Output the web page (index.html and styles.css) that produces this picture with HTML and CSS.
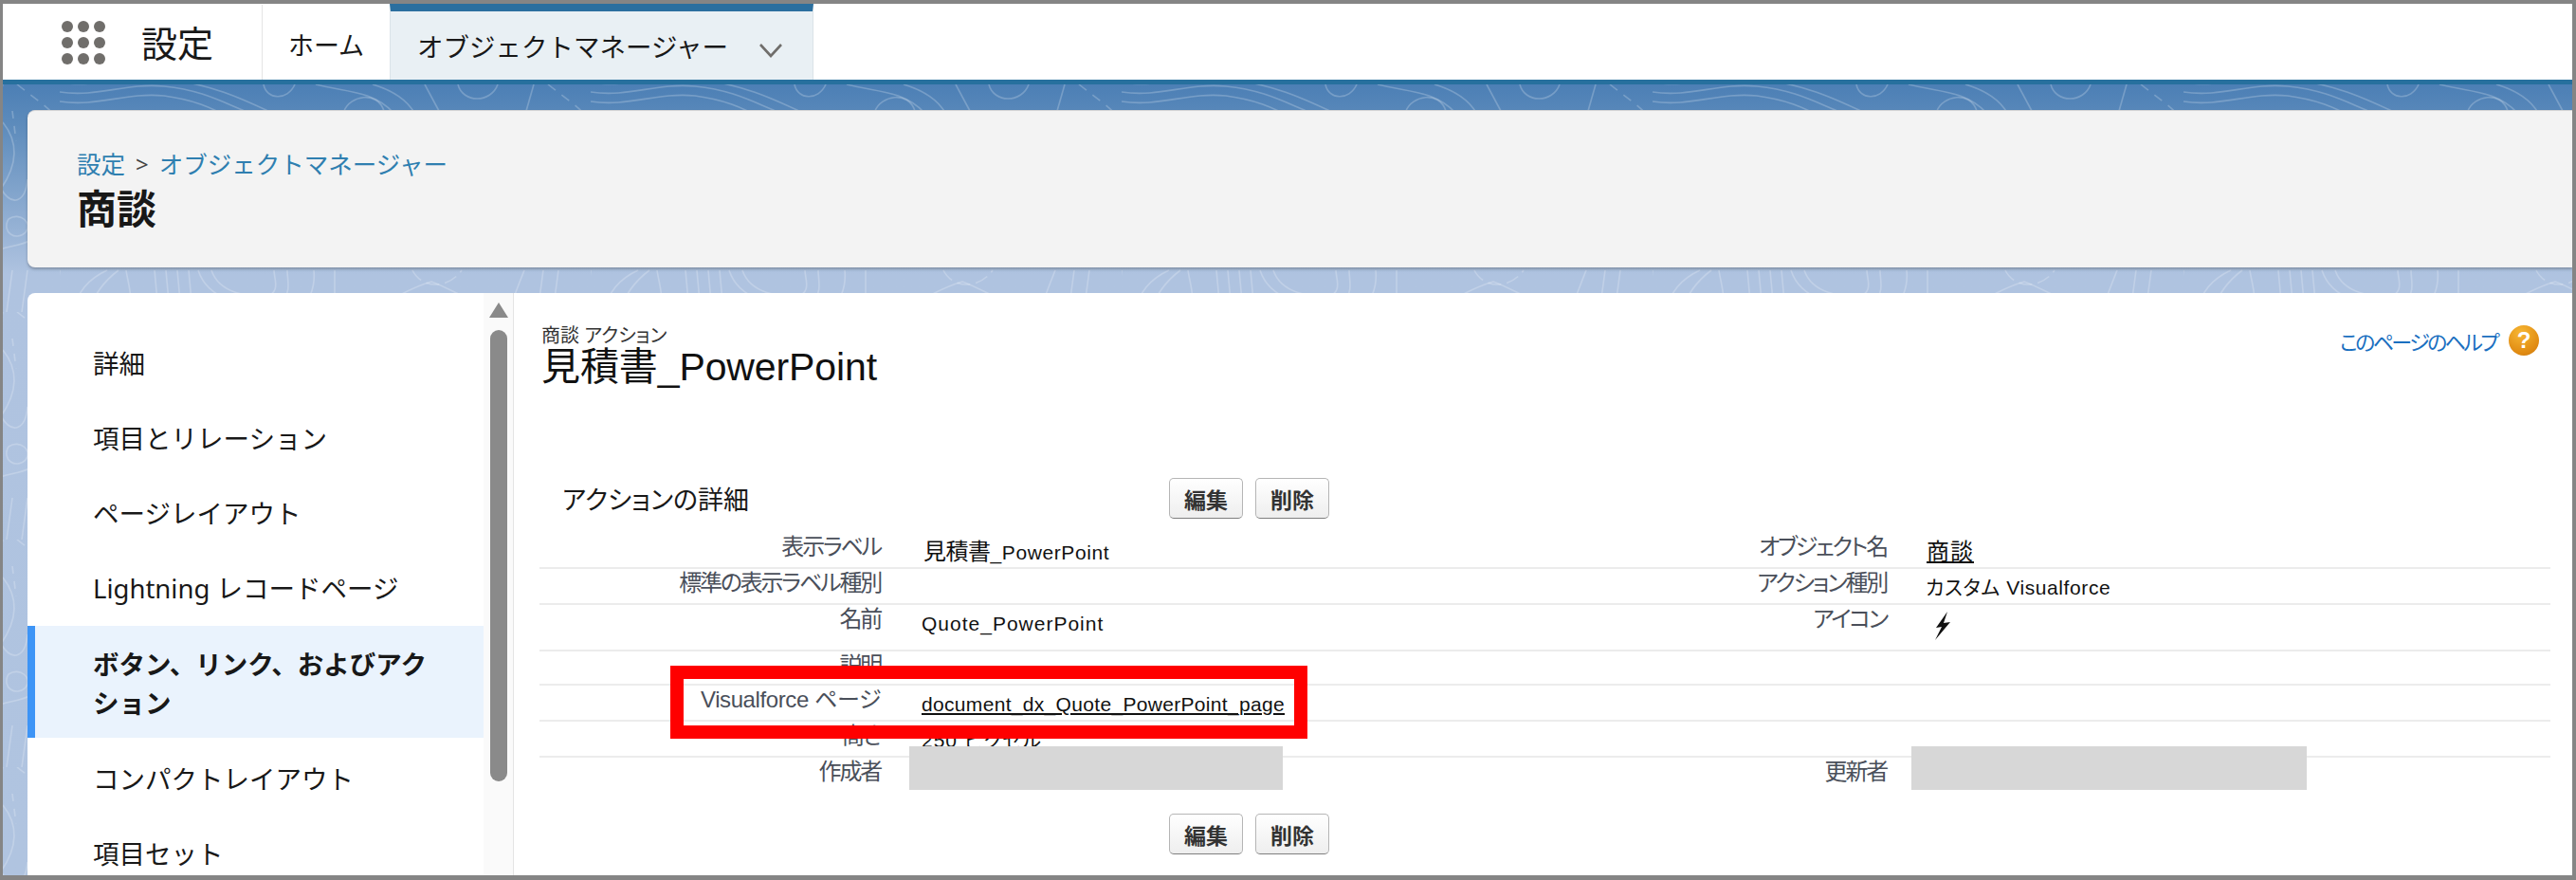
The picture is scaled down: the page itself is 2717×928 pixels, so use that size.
FILE: index.html
```html
<!DOCTYPE html>
<html lang="ja">
<head>
<meta charset="utf-8">
<title>商談 アクション</title>
<link rel="stylesheet" href="styles.css">
</head>
<body>
<div class="window">
  <header class="topbar">
    <div class="brand">
      <svg class="launcher" viewBox="0 0 46 46" width="46" height="46" aria-hidden="true">
        <g fill="#706e6b">
          <circle cx="6" cy="6" r="6"/><circle cx="23" cy="6" r="6"/><circle cx="40" cy="6" r="6"/>
          <circle cx="6" cy="23" r="6"/><circle cx="23" cy="23" r="6"/><circle cx="40" cy="23" r="6"/>
          <circle cx="6" cy="40" r="6"/><circle cx="23" cy="40" r="6"/><circle cx="40" cy="40" r="6"/>
        </g>
      </svg>
      <span class="brand-name">設定</span>
    </div>
    <div class="tab">ホーム</div>
    <div class="tab tab-active">
      <span>オブジェクトマネージャー</span>
      <svg class="chevron" viewBox="0 0 26 16" width="26" height="16" aria-hidden="true">
        <path d="M2 2 L13 14 L24 2" fill="none" stroke="#706e6b" stroke-width="2.6"/>
      </svg>
    </div>
  </header>
  <div class="brandbar"></div>

  <div class="stage">
    <svg class="contours" width="2710" height="840" aria-hidden="true">
      <defs>
        <pattern id="topo" width="560" height="240" patternUnits="userSpaceOnUse" x="60">
          <g fill="none" stroke="#ffffff" stroke-opacity="0.22" stroke-width="1.6">
            <path d="M0 8 C40 14 70 -2 110 2 C150 6 170 18 200 30"/>
            <path d="M0 18 C40 24 70 8 110 12 C140 16 160 24 180 36"/>
            <path d="M0 -2 C40 4 70 -10 110 -6 C160 0 190 14 224 30"/>
            <path d="M215 0 C218 16 240 18 248 0"/>
            <path d="M270 0 C300 8 330 6 352 30"/>
            <path d="M300 28 C306 12 335 6 342 28"/>
            <path d="M330 0 C350 6 366 16 374 30"/>
            <path d="M385 0 L400 28"/>
            <path d="M420 0 C425 20 455 20 462 0"/>
            <path d="M500 0 L492 28"/>
            <path d="M515 0 C530 12 545 22 552 30" stroke-dasharray="10 8"/>
            <path d="M500 40 C516 60 516 84 498 110 C510 130 524 124 526 100"/>
            <path d="M506 142 C518 134 532 146 524 156 C514 166 498 156 506 142"/>
            <path d="M490 178 C500 170 516 172 530 164"/>
            <path d="M510 28 L514 60" stroke-dasharray="8 8"/>
            <path d="M0 196 L-6 240"/>
            <path d="M14 240 C18 220 30 205 50 196"/>
            <path d="M30 240 C36 222 46 208 62 196"/>
            <path d="M70 196 C72 210 78 225 72 240"/>
            <path d="M100 196 L104 240 M112 196 L116 240 M124 196 L128 240 M136 196 L140 240"/>
            <path d="M160 196 C168 220 200 226 222 222 C232 216 226 204 226 196"/>
            <path d="M146 196 C156 226 190 236 236 230 C244 216 240 206 240 196"/>
            <path d="M268 196 C270 216 262 230 252 240"/>
            <path d="M290 196 L290 240"/>
            <path d="M330 240 C350 226 372 214 392 208 C410 214 440 234 470 240"/>
            <path d="M372 196 C382 216 410 216 424 196" stroke-dasharray="14 6"/>
            <path d="M350 240 C372 228 390 222 406 222 C420 226 440 236 455 240"/>
            <path d="M490 196 C482 216 476 232 474 240"/>
            <path d="M510 196 L504 240 M526 196 L520 240"/>
          </g>
        </pattern>
      </defs>
      <rect width="2710" height="840" fill="url(#topo)"/>
    </svg>

    <section class="page-head">
      <nav class="crumbs"><a class="crumb">設定</a><span class="crumb-sep">&gt;</span><a class="crumb">オブジェクトマネージャー</a></nav>
      <h1 class="object-name">商談</h1>
    </section>

    <section class="panel">
      <aside class="sidebar">
        <ul class="side-list">
          <li class="side-item">詳細</li>
          <li class="side-item">項目とリレーション</li>
          <li class="side-item">ページレイアウト</li>
          <li class="side-item">Lightning レコードページ</li>
          <li class="side-item side-item-active">ボタン、リンク、およびアクション</li>
          <li class="side-item">コンパクトレイアウト</li>
          <li class="side-item">項目セット</li>
        </ul>
        <div class="scroll-track">
          <span class="scroll-arrow"></span>
          <span class="scroll-thumb"></span>
        </div>
      </aside>

      <main class="content">
        <div class="content-head">
          <div class="title-block">
            <div class="eyebrow">商談 アクション</div>
            <div class="action-title">見積書_PowerPoint</div>
          </div>
          <a class="help">このページのヘルプ<span class="help-icon">?</span></a>
        </div>

        <div class="detail-head">
          <h2 class="detail-title">アクションの詳細</h2>
          <div class="btn-group"><button class="btn">編集</button><button class="btn">削除</button></div>
        </div>

        <div class="detail">
          <div class="row row-a">
            <div class="lbl">表示ラベル</div><div class="val val-first"><span class="cjk">見積書</span>_PowerPoint</div>
            <div class="lbl">オブジェクト名</div><div class="val val-r"><a class="link cjk cjk-link">商談</a></div>
          </div>
          <div class="row row-a">
            <div class="lbl">標準の表示ラベル種別</div><div class="val"></div>
            <div class="lbl">アクション種別</div><div class="val val-r val-tight">カスタム Visualforce</div>
          </div>
          <div class="row row-b">
            <div class="lbl">名前</div><div class="val">Quote_PowerPoint</div>
            <div class="lbl">アイコン</div>
            <div class="val val-r">
              <svg class="bolt" viewBox="0 0 20 30" width="20" height="30" aria-hidden="true">
                <path d="M15 0 L3 17 L9 16 L2 30 L18 11 L11 12 Z" fill="#111"/>
              </svg>
            </div>
          </div>
          <div class="row row-c">
            <div class="lbl">説明</div><div class="val"></div><div class="lbl"></div><div class="val val-r"></div>
          </div>
          <div class="row row-a">
            <div class="lbl lbl-latin">Visualforce ページ</div><div class="val"><a class="link link-long">document_dx_Quote_PowerPoint_page</a></div>
            <div class="lbl"></div><div class="val val-r"></div>
          </div>
          <div class="row row-a">
            <div class="lbl">高さ</div><div class="val">250 ピクセル</div><div class="lbl"></div><div class="val val-r"></div>
          </div>
          <div class="row row-last">
            <div class="lbl">作成者</div><div class="val"></div>
            <div class="lbl">更新者</div><div class="val val-r"></div>
          </div>
        </div>

        <div class="detail-foot">
          <div class="btn-group"><button class="btn">編集</button><button class="btn">削除</button></div>
        </div>
      </main>
    </section>
  </div>

  <div class="redact redact-left"></div>
  <div class="redact redact-right"></div>
  <div class="callout"></div>
</div>
</body>
</html>
```

FILE: styles.css
```css
* { box-sizing: border-box; }
html, body { margin: 0; padding: 0; background: #fff; }
body { font-family: "Noto Sans", "Noto Sans CJK JP", sans-serif; color: #181818; }

.window {
  position: relative;
  width: 2717px;
  height: 928px;
  overflow: hidden;
  display: flex;
  flex-direction: column;
  border-style: solid;
  border-color: #858585;
  border-width: 4px 4px 5px 3px;
  background: #fff;
}

/* top navigation */
.topbar { display: flex; height: 80px; flex: none; background: #fff; padding-top: 1px; }
.brand {
  display: flex;
  align-items: center;
  width: 274px;
  padding-left: 62px;
  border-right: 1px solid #e4e4e4;
}
.launcher { flex: none; }
.brand-name { margin-left: 38px; font-size: 38px; line-height: 1; }
.tab {
  display: flex;
  align-items: center;
  justify-content: center;
  width: 134px;
  font-size: 27px;
  padding-top: 4px;
}
.tab-active {
  width: 447px;
  justify-content: flex-start;
  padding: 0 0 0 28px;
  font-size: 27.5px;
  background: #e9f0f4;
  border-top: 8px solid #2b6f9f;
  border-left: 1px solid #dbe3e8;
  border-right: 1px solid #dbe3e8;
  margin-top: -1px;
}
.chevron { margin: 10px 0 0 32px; }
.brandbar { height: 5px; flex: none; background: #27709e; }

/* stage */
.stage {
  position: relative;
  flex: 1;
  min-height: 0;
  padding: 27px 0 0 26px;
  background: linear-gradient(#4c7fb5 0, #5e8cbc 45px, #afc3e0 200px, #b0c4e0 100%);
}
.contours { position: absolute; left: 0; top: 0; }

.page-head {
  position: relative;
  height: 166px;
  padding: 38px 0 0 52px;
  background: #f3f3f3;
  border-radius: 8px 0 0 8px;
  border-top: 1px solid #d5d5d5;
  box-shadow: 0 2px 3px rgba(0, 0, 0, .25);
}
.crumbs { display: flex; align-items: center; font-size: 25.5px; line-height: 36px; }
.crumb { color: #2f7fb0; }
.crumb-sep { margin: 0 11px 0 11px; color: #444; font-size: 24px; }
.object-name { margin: 1px 0 0; font-size: 42px; line-height: 56px; font-weight: 700; color: #181818; }

.panel {
  position: relative;
  display: flex;
  height: 620px;
  margin-top: 27px;
  background: #fff;
  border-radius: 8px 0 0 0;
  overflow: hidden;
}

/* sidebar */
.sidebar { display: flex; flex: none; width: 513px; }
.side-list { list-style: none; margin: 0; padding: 35px 0 0; width: 481px; flex: none; }
.side-item {
  display: flex;
  align-items: center;
  height: 79px;
  padding: 0 20px 0 69px;
  font-size: 27.5px;
  line-height: 41px;
  color: #181818;
}
.side-item-active {
  height: 118px;
  margin-bottom: 4px;
  padding: 3px 40px 0 61px;
  background: #eaf3fd;
  border-left: 8px solid #3d94f6;
  font-weight: 700;
}
.scroll-track {
  display: flex;
  flex-direction: column;
  align-items: center;
  width: 32px;
  background: #fafafa;
  border-right: 1px solid #e4e4e4;
}
.scroll-arrow {
  margin-top: 10px;
  width: 0;
  height: 0;
  border-left: 10px solid transparent;
  border-right: 10px solid transparent;
  border-bottom: 16px solid #8a8a8a;
}
.scroll-thumb {
  margin-top: 13px;
  width: 18px;
  height: 476px;
  border-radius: 9px;
  background: #8a8a8a;
}

/* content */
.content { flex: 1; min-width: 0; padding: 0 23px 0 27px; font-family: "Liberation Sans", "Noto Sans CJK JP", sans-serif; }
.content-head { display: flex; justify-content: space-between; height: 170px; padding: 34px 12px 0 2px; }
.eyebrow { font-size: 20px; line-height: 22px; font-feature-settings: "palt"; color: #333; }
.action-title { font-size: 41px; line-height: 44px; color: #111; letter-spacing: -.1px; }
.help {
  display: flex;
  align-items: center;
  height: 32px;
  font-size: 22px;
  letter-spacing: -2.6px;
  color: #1a6fc0;
  font-feature-settings: "palt";
}
.help-icon {
  display: flex;
  align-items: center;
  justify-content: center;
  width: 32px;
  height: 32px;
  margin-left: 12px;
  border-radius: 50%;
  background: radial-gradient(circle at 40% 25%, #f7b733, #e08a12 70%, #c4760f);
  color: #fff;
  font-size: 24px;
  font-weight: 700;
  letter-spacing: 0;
}

.detail-head { display: flex; align-items: center; height: 43px; margin-top: 25px; padding-left: 24px; }
.detail-title {
  width: 640px;
  margin: 0;
  font-size: 27px;
  font-weight: 400;
  color: #181818;
  font-feature-settings: "palt";
}
.btn-group { display: flex; gap: 13px; }
.btn {
  width: 78px;
  height: 43px;
  padding: 0;
  font-family: inherit;
  font-size: 23px;
  font-weight: 700;
  color: #333;
  background: linear-gradient(#fff, #eeeeee);
  border: 1px solid #b5b5b5;
  border-bottom-color: #7f7f7f;
  border-radius: 5px;
}

.detail { margin-top: 15px; }
.row {
  display: grid;
  grid-template-columns: 360px 671px 390px 1fr;
  border-bottom: 2px solid #ececec;
}
.row-a { height: 38px; }
.row-b { height: 49px; }
.row-c { height: 36px; }
.row-last { height: 38px; border-bottom: 0; }
.lbl {
  text-align: right;
  font-size: 24px;
  line-height: 30px;
  letter-spacing: -2.2px;
  color: #4a4f5a;
  font-feature-settings: "palt";
  white-space: nowrap;
}
.lbl-latin { letter-spacing: -.4px; }
.val {
  padding: 5px 0 0 43px;
  font-size: 21px;
  line-height: 30px;
  letter-spacing: 1px;
  color: #111;
  font-feature-settings: "palt";
  white-space: nowrap;
}
.val-first { padding-left: 45px; letter-spacing: .6px; }
.val-r { padding-left: 41px; }
.val-tight { letter-spacing: .6px; }
.cjk { font-size: 24px; letter-spacing: -.5px; }
.cjk-link { margin-left: 1px; letter-spacing: 1px; }
.link { color: #111; text-decoration: underline; }
.link-long { letter-spacing: .32px; }
.bolt { display: block; margin: 2px 0 0 8px; }

.detail-foot { margin-top: 21px; padding-left: 664px; }

/* overlays */
.redact { position: absolute; top: 783px; height: 46px; background: #d7d7d7; }
.redact-left { left: 956px; width: 394px; }
.redact-right { left: 2013px; width: 417px; }
.callout {
  position: absolute;
  left: 704px;
  top: 698px;
  width: 672px;
  height: 77px;
  border: 14px solid #ff0000;
}
```
